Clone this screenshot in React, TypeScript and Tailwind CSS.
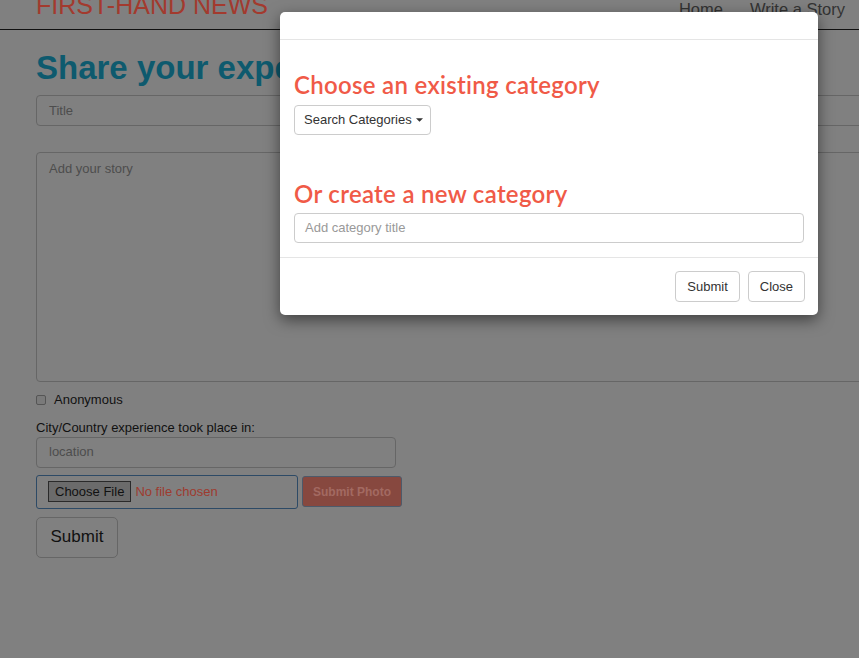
const sans = "font-['Liberation_Sans',Arial,sans-serif]";
const head = "font-['Lato','Noto_Sans',sans-serif]";

export default function App() {
  return (
    <div className={`relative h-[658px] w-[859px] overflow-hidden bg-[#808080] ${sans}`}>
      {/* page behind the dimmed overlay */}
      <div className="flex h-[30px] items-end justify-between border-b border-[#111] pl-9 pr-[14px]">
        <div className="mb-[11px] text-[25px] leading-none text-[#a33a2e]">FIRST-HAND NEWS</div>
        <div className="mb-[12px] flex gap-[27px] text-[16.5px] leading-none text-[#333]">
          <span>Home</span>
          <span>Write a Story</span>
        </div>
      </div>

      <div className="flex flex-col pl-9">
        <h1 className="mt-[18px] text-[33px] font-bold leading-[40px] text-[#0e5a6e] whitespace-nowrap">
          Share your experience
        </h1>
        <div className="mt-[7px] flex h-[31px] w-[900px] items-center rounded border border-[#666] px-3 text-[13px] text-[#4d4d4d]">
          Title
        </div>
        <div className="mt-[26px] h-[230px] w-[900px] rounded border border-[#666] px-3 pt-[6px] text-[13px] text-[#4d4d4d]">
          Add your story
        </div>
        <div className="mt-[8px] flex items-center gap-[8px] text-[13px] text-[#111]">
          <div className="h-[10px] w-[10px] rounded-[2px] border border-[#555] bg-[#7a7a7a]" />
          <span>Anonymous</span>
        </div>
        <div className="mt-[10px] text-[13px] leading-[16px] text-[#111]">City/Country experience took place in:</div>
        <div className="mt-px flex h-[31px] w-[360px] items-center rounded border border-[#666] px-3 text-[13px] text-[#4d4d4d]">
          location
        </div>
        <div className="mt-[7px] flex items-center gap-1">
          <div className="flex h-[34px] w-[262px] items-center gap-[4px] rounded-[3px] border border-[#2d4a66] pl-[11px]">
            <div className="flex h-[21px] items-center border border-[#2a2a2a] bg-[#6b6b6b] px-[6px] text-[13px] text-[#111]">
              Choose File
            </div>
            <span className="text-[13px] text-[#9e3b2f]">No file chosen</span>
          </div>
          <div className="flex h-[31px] w-[100px] items-center justify-center rounded-[3px] border border-[#4d5a6a] bg-[#87483f] text-[12px] font-bold text-[#a36a62]">
            Submit Photo
          </div>
        </div>
        <div className="mt-[8px] flex h-[41px] w-[82px] items-center justify-center rounded-[5px] border border-[#666] text-[17px] text-[#111]">
          Submit
        </div>
      </div>

      {/* modal */}
      <div className="absolute left-[280px] top-[12px] flex w-[538px] flex-col rounded-[5px] bg-white shadow-[0_5px_15px_rgba(0,0,0,0.5)]">
        <div className="h-[28px] border-b border-[#e5e5e5]" />
        <div className="flex flex-col px-[14px] pb-[14px]">
          <h2 className={`mt-[30px] text-[24px] font-semibold leading-[30px] tracking-[0.3px] text-[#f05a47] ${head}`}>
            Choose an existing category
          </h2>
          <div className="mt-[5px] flex">
            <div className="flex h-[30px] items-center gap-[4px] rounded border border-[#ccc] pl-[9px] pr-[7px] text-[13px] text-[#333]">
              Search Categories
              <svg width="7" height="4" viewBox="0 0 8 4">
                <path d="M0 0h8L4 4z" fill="#333" />
              </svg>
            </div>
          </div>
          <h2 className={`mt-[44px] text-[24px] font-semibold leading-[30px] tracking-[0.3px] text-[#f05a47] ${head}`}>
            Or create a new category
          </h2>
          <div className="mt-[4px] flex h-[30px] items-center rounded border border-[#ccc] px-[10px] text-[13px] text-[#999]">
            Add category title
          </div>
        </div>
        <div className="flex justify-end gap-[8px] border-t border-[#e5e5e5] px-[13px] pb-[13px] pt-[13px]">
          <div className="flex h-[31px] items-center rounded border border-[#ccc] px-[11px] text-[13px] text-[#333]">Submit</div>
          <div className="flex h-[31px] items-center rounded border border-[#ccc] px-[11px] text-[13px] text-[#333]">Close</div>
        </div>
      </div>
    </div>
  );
}
